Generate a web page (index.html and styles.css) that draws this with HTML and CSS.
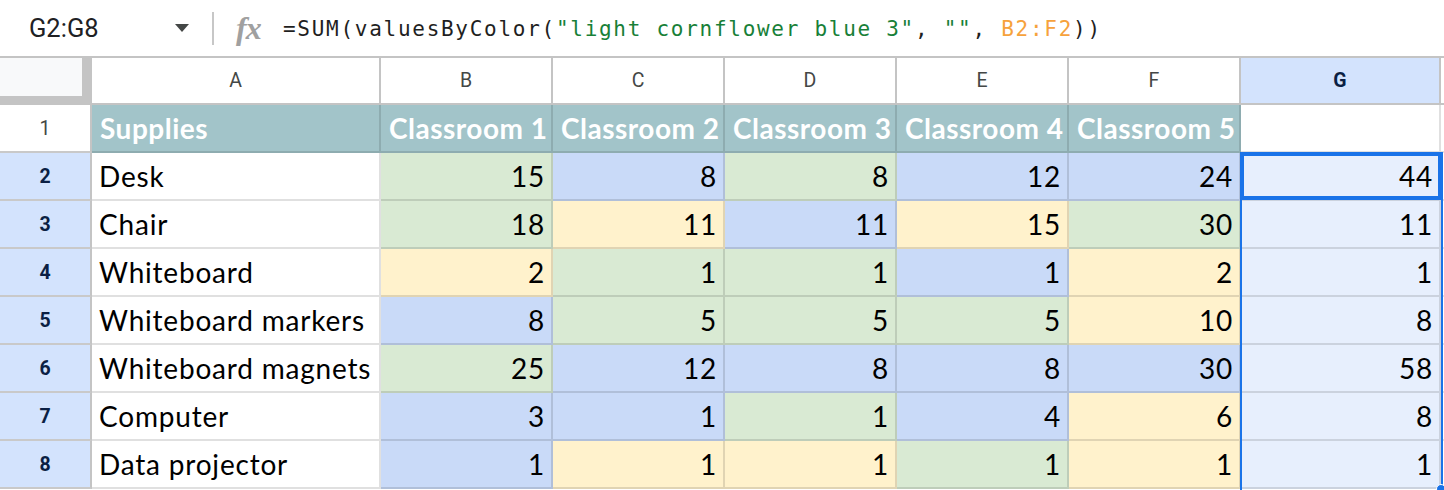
FILE: index.html
```html
<!DOCTYPE html>
<html>
<head>
<meta charset="utf-8">
<link rel="stylesheet" href="styles.css">
</head>
<body>
<div class="toolbar">
  <div class="namebox"><span class="range-name">G2:G8</span><span class="caret"></span></div>
  <div class="sep"></div>
  <div class="fx">fx</div>
  <div class="formula">=SUM(valuesByColor(<span class="str">"light cornflower blue 3"</span>, <span class="str">""</span>, <span class="ref">B2:F2</span>))</div>
</div>
<div class="sheet">
  <div class="corner"><div class="corner-box"></div></div>
  <div class="colhead">A</div>
  <div class="colhead">B</div>
  <div class="colhead">C</div>
  <div class="colhead">D</div>
  <div class="colhead">E</div>
  <div class="colhead">F</div>
  <div class="colhead sel">G</div>
  <div class="colhead"></div>

  <div class="rowhead">1</div>
  <div class="cell hdr">Supplies</div>
  <div class="cell hdr">Classroom 1</div>
  <div class="cell hdr">Classroom 2</div>
  <div class="cell hdr">Classroom 3</div>
  <div class="cell hdr">Classroom 4</div>
  <div class="cell hdr">Classroom 5</div>
  <div class="cell"></div>
  <div class="cell"></div>

  <div class="rowhead sel">2</div>
  <div class="cell">Desk</div>
  <div class="cell num g">15</div>
  <div class="cell num b">8</div>
  <div class="cell num g">8</div>
  <div class="cell num b">12</div>
  <div class="cell num b">24</div>
  <div class="cell num s">44</div>
  <div class="cell"></div>

  <div class="rowhead sel">3</div>
  <div class="cell">Chair</div>
  <div class="cell num g">18</div>
  <div class="cell num y">11</div>
  <div class="cell num b">11</div>
  <div class="cell num y">15</div>
  <div class="cell num g">30</div>
  <div class="cell num s">11</div>
  <div class="cell"></div>

  <div class="rowhead sel">4</div>
  <div class="cell">Whiteboard</div>
  <div class="cell num y">2</div>
  <div class="cell num g">1</div>
  <div class="cell num g">1</div>
  <div class="cell num b">1</div>
  <div class="cell num y">2</div>
  <div class="cell num s">1</div>
  <div class="cell"></div>

  <div class="rowhead sel">5</div>
  <div class="cell">Whiteboard markers</div>
  <div class="cell num b">8</div>
  <div class="cell num g">5</div>
  <div class="cell num g">5</div>
  <div class="cell num g">5</div>
  <div class="cell num y">10</div>
  <div class="cell num s">8</div>
  <div class="cell"></div>

  <div class="rowhead sel">6</div>
  <div class="cell">Whiteboard magnets</div>
  <div class="cell num g">25</div>
  <div class="cell num b">12</div>
  <div class="cell num b">8</div>
  <div class="cell num b">8</div>
  <div class="cell num b">30</div>
  <div class="cell num s">58</div>
  <div class="cell"></div>

  <div class="rowhead sel">7</div>
  <div class="cell">Computer</div>
  <div class="cell num b">3</div>
  <div class="cell num b">1</div>
  <div class="cell num g">1</div>
  <div class="cell num b">4</div>
  <div class="cell num y">6</div>
  <div class="cell num s">8</div>
  <div class="cell"></div>

  <div class="rowhead sel">8</div>
  <div class="cell">Data projector</div>
  <div class="cell num b">1</div>
  <div class="cell num y">1</div>
  <div class="cell num y">1</div>
  <div class="cell num g">1</div>
  <div class="cell num y">1</div>
  <div class="cell num s">1</div>
  <div class="cell"></div>

  <div class="range-box"></div>
  <div class="active-box"></div>
  <div class="fill-handle"></div>
</div>
</body>
</html>
```

FILE: styles.css
```css
html, body {
  margin: 0;
  padding: 0;
  background: #fff;
  overflow: hidden;
  width: 1444px;
  height: 490px;
}

.toolbar {
  height: 56px;
  border-bottom: 2px solid #c4c4c4;
  display: flex;
  align-items: center;
  font-family: Roboto, "Liberation Sans", sans-serif;
}

.namebox {
  display: flex;
  align-items: center;
  width: 212px;
  padding-left: 29px;
  box-sizing: border-box;
}

.range-name {
  font-size: 25.5px;
  color: #202124;
  width: 146px;
}

.caret {
  width: 0;
  height: 0;
  border-left: 7px solid transparent;
  border-right: 7px solid transparent;
  border-top: 8px solid #444746;
}

.sep {
  width: 2px;
  height: 33px;
  background: #c7c7c7;
}

.fx {
  font-family: "Liberation Serif", serif;
  font-style: italic;
  font-weight: bold;
  font-size: 32px;
  color: #a0a0a0;
  margin-left: 22px;
  width: 47px;
  letter-spacing: -1px;
}

.formula {
  font-family: "DejaVu Sans Mono", monospace;
  font-size: 21px;
  letter-spacing: 1.72px;
  color: #1f1f1f;
  white-space: pre;
  padding-top: 2px;
}

.formula .str { color: #188038; }
.formula .ref { color: #f6a23c; }

.sheet {
  position: relative;
  display: grid;
  grid-template-columns: 92px 289px repeat(5, 172px) 200px 60px;
  grid-template-rows: 47px repeat(8, 48px);
}

.corner {
  background: #c4c4c4;
}

.corner-box {
  width: 82px;
  height: 38px;
  background: #f8f9fa;
}

.colhead {
  box-sizing: border-box;
  border-right: 2px solid #c4c4c4;
  border-bottom: 2px solid #c4c4c4;
  display: flex;
  align-items: center;
  justify-content: center;
  font-family: Roboto, "Liberation Sans", sans-serif;
  font-size: 19.5px;
  color: #444746;
  background: #fff;
}

.colhead.sel {
  background: #d3e3fd;
  color: #0b1f44;
  font-weight: bold;
}

.rowhead {
  box-sizing: border-box;
  border-right: 2px solid #c4c4c4;
  border-bottom: 2px solid #c9c9c9;
  display: flex;
  align-items: center;
  justify-content: center;
  font-family: Roboto, "Liberation Sans", sans-serif;
  font-size: 19.5px;
  color: #444746;
  background: #fff;
}

.rowhead.sel {
  background: #d3e3fd;
  color: #0b1f44;
  font-weight: bold;
}

.cell {
  box-sizing: border-box;
  border-right: 2px solid rgba(0, 0, 0, 0.12);
  border-bottom: 2px solid rgba(0, 0, 0, 0.12);
  font-family: Lato, "Open Sans", sans-serif;
  font-size: 28px;
  letter-spacing: 0.8px;
  line-height: 46px;
  color: #000;
  padding: 0 7px;
  white-space: nowrap;
  overflow: hidden;
}

.cell.num { text-align: right; padding-right: 6px; }

.cell.hdr {
  background: #a2c4c9;
  color: #fff;
  font-weight: bold;
  letter-spacing: 0.5px;
  padding-left: 8px;
}

.cell.g { background: #d9ead3; }
.cell.b { background: #c9daf8; }
.cell.y { background: #fff2cc; }
.cell.s { background: #e7effd; }

.range-box {
  position: absolute;
  left: 1240px;
  top: 94px;
  width: 203px;
  height: 345px;
  box-sizing: border-box;
  border: 2px solid #1a73e8;
  pointer-events: none;
}

.active-box {
  position: absolute;
  left: 1240px;
  top: 94px;
  width: 202px;
  height: 48px;
  box-sizing: border-box;
  border: 4px solid #1a73e8;
  pointer-events: none;
}

.fill-handle {
  position: absolute;
  left: 1436px;
  top: 426px;
  width: 10px;
  height: 10px;
  box-sizing: border-box;
  border-radius: 50%;
  background: #1a73e8;
  border: 1px solid #fff;
}
```
